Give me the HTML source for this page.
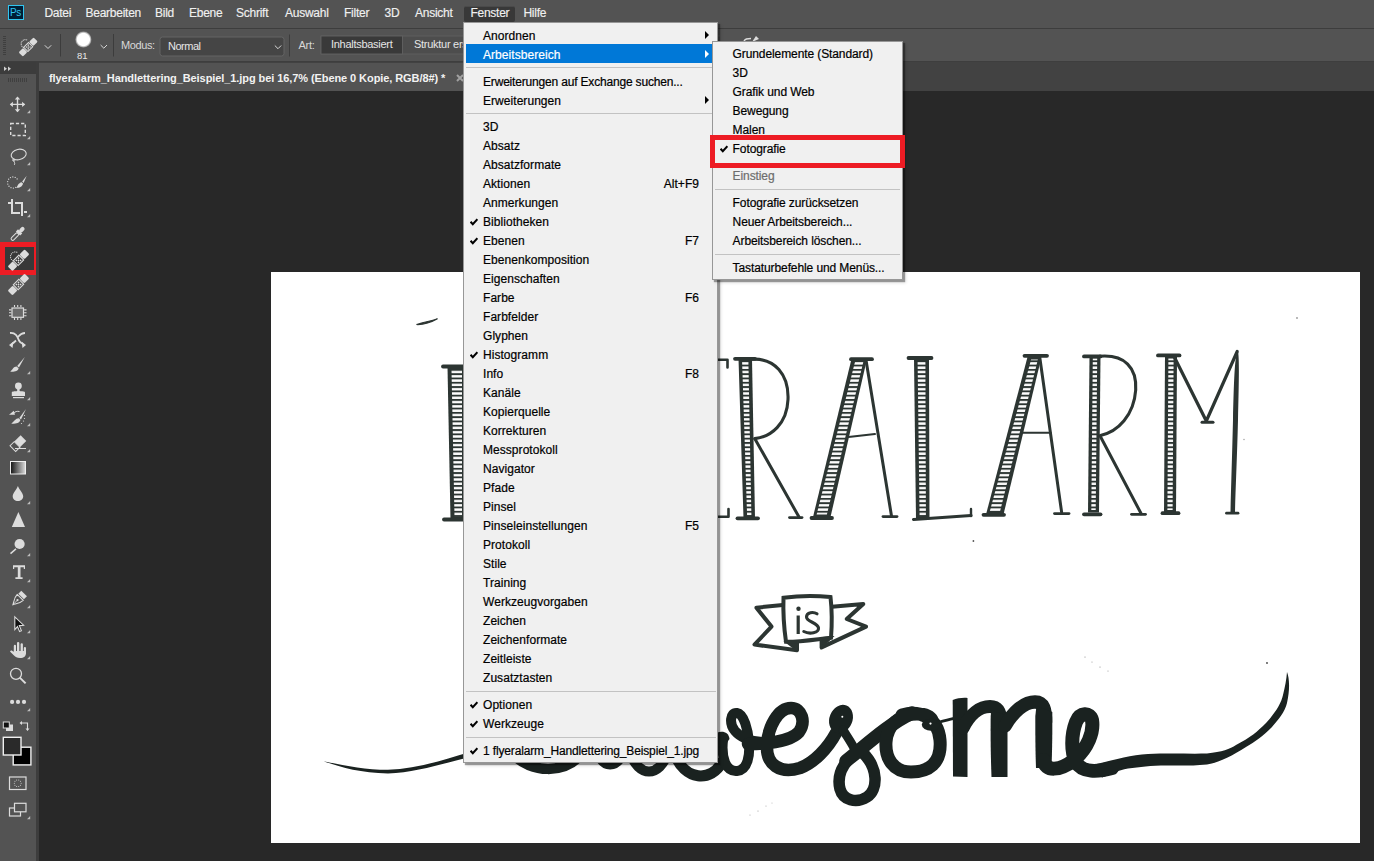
<!DOCTYPE html><html><head><meta charset="utf-8"><style>
*{margin:0;padding:0;box-sizing:border-box}
html,body{width:1374px;height:861px;overflow:hidden;background:#282828;font-family:"Liberation Sans",sans-serif;position:relative}
.a{position:absolute}
.t{position:absolute;white-space:nowrap;line-height:19px}
#menubar{left:0;top:0;width:1374px;height:28px;background:#535353}
.mb{font-size:12px;color:#f0f0f0;letter-spacing:-0.25px;-webkit-text-stroke:0.15px currentColor}
.menu{position:absolute;background:#f0f0f0;border:1px solid #979797;box-shadow:2px 2px 1px rgba(0,0,0,.35),3px 3px 3px rgba(0,0,0,.12)}
.mi{font-size:12px;color:#000;letter-spacing:0.05px;-webkit-text-stroke:0.2px currentColor}
.sep{position:absolute;height:1px;background:#c2c2c2}
.chk{position:absolute}
</style></head><body>
<div id="menubar" class="a"></div>
<div class="a" style="left:0;top:28px;width:1374px;height:1px;background:#3d3d3d"></div>
<div class="a" style="left:8px;top:5px;width:16px;height:15px;background:#001e36;border:1px solid #31c5f0"></div>
<div class="t" style="left:10px;top:3px;font-size:10px;color:#31c5f0;letter-spacing:-0.3px">Ps</div>
<div class="a" style="left:464px;top:6px;width:51px;height:16px;background:#383838;border-radius:2px;border-top:1px solid #4a4a4a"></div>
<div class="t mb" style="left:44.4px;top:4px">Datei</div>
<div class="t mb" style="left:85.5px;top:4px">Bearbeiten</div>
<div class="t mb" style="left:155px;top:4px">Bild</div>
<div class="t mb" style="left:189px;top:4px">Ebene</div>
<div class="t mb" style="left:236px;top:4px">Schrift</div>
<div class="t mb" style="left:285px;top:4px">Auswahl</div>
<div class="t mb" style="left:344px;top:4px">Filter</div>
<div class="t mb" style="left:384.6px;top:4px">3D</div>
<div class="t mb" style="left:415px;top:4px">Ansicht</div>
<div class="t mb" style="left:470.4px;top:4px">Fenster</div>
<div class="t mb" style="left:523.4px;top:4px">Hilfe</div>
<div class="a" style="left:0;top:29px;width:1374px;height:33px;background:#535353"></div>
<div class="a" style="left:0;top:61px;width:1374px;height:1px;background:#3e3e3e"></div>
<svg class="a" style="left:0;top:29px" width="720" height="33" viewBox="0 29 720 33">
<rect x="3" y="36" width="3" height="1" fill="#3f3f3f"/>
<rect x="3" y="38" width="3" height="1" fill="#3f3f3f"/>
<rect x="3" y="40" width="3" height="1" fill="#3f3f3f"/>
<rect x="3" y="42" width="3" height="1" fill="#3f3f3f"/>
<rect x="3" y="44" width="3" height="1" fill="#3f3f3f"/>
<rect x="3" y="46" width="3" height="1" fill="#3f3f3f"/>
<rect x="3" y="48" width="3" height="1" fill="#3f3f3f"/>
<rect x="3" y="50" width="3" height="1" fill="#3f3f3f"/>
<rect x="3" y="52" width="3" height="1" fill="#3f3f3f"/>
<rect x="3" y="54" width="3" height="1" fill="#3f3f3f"/>
<g transform="translate(28.2 47) scale(0.88) rotate(-45)"><rect x="-12" y="-3.4" width="7.2" height="6.8" rx="1.3" fill="#dcdcdc"/><rect x="4.8" y="-3.4" width="7.2" height="6.8" rx="1.3" fill="#dcdcdc"/><rect x="-3.9" y="-3.4" width="7.8" height="6.8" fill="none" stroke="#dcdcdc" stroke-width="1.1"/><circle cx="-1.5" cy="-1.5" r="0.85" fill="#dcdcdc"/><circle cx="1.5" cy="-1.5" r="0.85" fill="#dcdcdc"/><circle cx="-1.5" cy="1.5" r="0.85" fill="#dcdcdc"/><circle cx="1.5" cy="1.5" r="0.85" fill="#dcdcdc"/><circle cx="0" cy="0" r="0.85" fill="#dcdcdc"/></g><circle cx="23.27" cy="47.49" r="0.6" fill="#dcdcdc"/><circle cx="21.97" cy="46.31" r="0.6" fill="#dcdcdc"/><circle cx="21.25" cy="44.71" r="0.6" fill="#dcdcdc"/><circle cx="21.25" cy="42.95" r="0.6" fill="#dcdcdc"/><circle cx="21.97" cy="41.35" r="0.6" fill="#dcdcdc"/><circle cx="23.27" cy="40.17" r="0.6" fill="#dcdcdc"/><circle cx="24.94" cy="39.63" r="0.6" fill="#dcdcdc"/><circle cx="26.69" cy="39.81" r="0.6" fill="#dcdcdc"/>
<rect x="60.0" y="34" width="1" height="22.5" fill="#3c3c3c"/>
<rect x="113.0" y="34" width="1" height="22.5" fill="#3c3c3c"/>
<rect x="289.0" y="34.5" width="1" height="22.0" fill="#3c3c3c"/>
<rect x="730.0" y="34" width="1" height="7" fill="#3c3c3c"/>
<defs><radialGradient id="bc"><stop offset="0.75" stop-color="#fff"/><stop offset="1" stop-color="#fff" stop-opacity="0.2"/></radialGradient></defs>
<circle cx="83.4" cy="39.5" r="8.2" fill="url(#bc)"/>
<rect x="160" y="37" width="124" height="19" rx="2.5" fill="#454545" stroke="#646464" stroke-width="1"/>
<rect x="321" y="36" width="420" height="18" fill="#4d4d4d" stroke="#5e5e5e" stroke-width="1"/>
<rect x="321" y="36" width="81.5" height="18" fill="#393939" stroke="#5e5e5e" stroke-width="1"/>
<path d="M44.8 45.3 L48.0 48.5 L51.199999999999996 45.3" fill="none" stroke="#d8d8d8" stroke-width="1"/>
<path d="M100.6 45 L103.8 48.2 L107.0 45" fill="none" stroke="#d8d8d8" stroke-width="1"/>
<path d="M274.8 45.5 L278.0 48.7 L281.2 45.5" fill="none" stroke="#d8d8d8" stroke-width="1"/>
</svg>
<div style="position:absolute;white-space:nowrap;line-height:14px;font-size:11px;color:#e6e6e6;left:77px;top:48.5px;font-size:9.5px;letter-spacing:-0.1px">81</div>
<div style="position:absolute;white-space:nowrap;line-height:14px;font-size:11px;color:#e6e6e6;left:121px;top:38px;letter-spacing:-0.4px;color:#d8d8d8">Modus:</div>
<div style="position:absolute;white-space:nowrap;line-height:14px;font-size:11px;color:#e6e6e6;left:168px;top:39px;letter-spacing:-0.5px">Normal</div>
<div style="position:absolute;white-space:nowrap;line-height:14px;font-size:11px;color:#e6e6e6;left:298.5px;top:37.5px;letter-spacing:-0.3px;color:#d8d8d8">Art:</div>
<div style="position:absolute;white-space:nowrap;line-height:14px;font-size:11px;color:#e6e6e6;left:331px;top:37px;letter-spacing:-0.28px">Inhaltsbasiert</div>
<div style="position:absolute;white-space:nowrap;line-height:14px;font-size:11px;color:#e6e6e6;left:414px;top:37px;letter-spacing:-0.28px">Struktur erstellen</div>
<svg class="a" style="left:740px;top:33px" width="24" height="10" viewBox="0 0 24 10"><path d="M4 8 C5 5.5 7 5.5 11 5.5" stroke="#ddd" stroke-width="1.3" fill="none"/><path d="M12 9 L16 3 L19 6 Z" fill="#ddd"/></svg>
<div class="a" style="left:39px;top:62px;width:1335px;height:29px;background:#424242"></div>
<div class="a" style="left:39px;top:63px;width:470px;height:28px;background:#535353"></div>
<div class="t" style="left:49px;top:69px;font-size:11px;font-weight:bold;color:#f2f2f2;letter-spacing:-0.08px">flyeralarm_Handlettering_Beispiel_1.jpg bei 16,7% (Ebene 0 Kopie, RGB/8#) *</div>
<svg class="a" style="left:456px;top:73.5px" width="8" height="8" viewBox="0 0 8 8"><path d="M1 1 L7 7 M7 1 L1 7" stroke="#a0a0a0" stroke-width="2"/></svg>
<div class="a" style="left:0;top:62px;width:36px;height:12px;background:#3c3c3c"></div>
<div class="a" style="left:0;top:74px;width:36px;height:787px;background:#535353"></div>
<div class="a" style="left:36px;top:62px;width:3px;height:799px;background:#3d3d3d"></div>
<svg class="a" style="left:0;top:0" width="36" height="861" viewBox="0 0 36 861">
<path d="M4 66.5 L7 68.8 L4 71 Z M8 66.5 L11 68.8 L8 71 Z" fill="#cfcfcf"/>
<rect x="8" y="78" width="1" height="4" fill="#3f3f3f"/>
<rect x="10" y="78" width="1" height="4" fill="#3f3f3f"/>
<rect x="12" y="78" width="1" height="4" fill="#3f3f3f"/>
<rect x="14" y="78" width="1" height="4" fill="#3f3f3f"/>
<rect x="16" y="78" width="1" height="4" fill="#3f3f3f"/>
<rect x="18" y="78" width="1" height="4" fill="#3f3f3f"/>
<rect x="20" y="78" width="1" height="4" fill="#3f3f3f"/>
<rect x="22" y="78" width="1" height="4" fill="#3f3f3f"/>
<rect x="24" y="78" width="1" height="4" fill="#3f3f3f"/>
<rect x="26" y="78" width="1" height="4" fill="#3f3f3f"/>
<g stroke="#dcdcdc" stroke-width="1.4" fill="none"><path d="M17.5 97.5 V111.5 M10.5 104.4 H24.5"/></g>
<path d="M17.5 96.5 L20.2 99.6 L14.8 99.6 Z M17.5 112.3 L20.2 109.2 L14.8 109.2 Z M9.8 104.4 L12.9 101.7 L12.9 107.1 Z M25.2 104.4 L22.1 101.7 L22.1 107.1 Z" fill="#dcdcdc"/>
<path d="M30.2 110 L30.2 113.2 L27 113.2 Z" fill="#bdbdbd"/>
<rect x="10.7" y="123.5" width="14.6" height="12" fill="none" stroke="#dcdcdc" stroke-width="1.4" stroke-dasharray="3.2 2"/>
<path d="M30.2 136 L30.2 139.2 L27 139.2 Z" fill="#bdbdbd"/>
<ellipse cx="18.7" cy="154.5" rx="7.6" ry="5.2" transform="rotate(-12 18.7 154.5)" fill="none" stroke="#dcdcdc" stroke-width="1.1"/>
<path d="M12.5 159.5 C12 161.5 15.5 161.5 14.8 159.6 C14.5 158.5 13 158.8 13.6 160.5 C14.2 162 15.2 163 14.4 164.8" fill="none" stroke="#dcdcdc" stroke-width="1"/>
<path d="M30.2 162 L30.2 165.2 L27 165.2 Z" fill="#bdbdbd"/>
<circle cx="15.70" cy="187.35" r="0.65" fill="#dcdcdc"/>
<circle cx="13.38" cy="188.09" r="0.65" fill="#dcdcdc"/>
<circle cx="10.98" cy="187.69" r="0.65" fill="#dcdcdc"/>
<circle cx="8.99" cy="186.25" r="0.65" fill="#dcdcdc"/>
<circle cx="7.81" cy="184.04" r="0.65" fill="#dcdcdc"/>
<circle cx="7.68" cy="181.53" r="0.65" fill="#dcdcdc"/>
<circle cx="8.63" cy="179.21" r="0.65" fill="#dcdcdc"/>
<circle cx="10.46" cy="177.56" r="0.65" fill="#dcdcdc"/>
<circle cx="12.81" cy="176.90" r="0.65" fill="#dcdcdc"/>
<circle cx="15.20" cy="177.38" r="0.65" fill="#dcdcdc"/>
<circle cx="17.14" cy="178.90" r="0.65" fill="#dcdcdc"/>
<path d="M26.7 175.8 L22.2 181.6 L23.6 183 Z" fill="#dcdcdc"/><path d="M21.6 182.2 C18.5 182.8 17.5 186 16.2 188 C19 188 22.5 187 23 183.6 Z" fill="#dcdcdc"/>
<path d="M30.2 188 L30.2 191.2 L27 191.2 Z" fill="#bdbdbd"/>
<path d="M12 199 V213 H20 M15 203 H22 V216 M8 203 H11 M24 212 H27" fill="none" stroke="#dcdcdc" stroke-width="2"/>
<path d="M30.2 214 L30.2 217.2 L27 217.2 Z" fill="#bdbdbd"/>
<g transform="translate(18 233.5) rotate(-45)"><rect x="-9" y="-1.6" width="9" height="3.2" rx="1.5" fill="none" stroke="#dcdcdc" stroke-width="1"/><rect x="0" y="-3" width="3" height="6" fill="#dcdcdc"/><rect x="2.5" y="-2" width="6" height="4" rx="2" fill="#dcdcdc"/></g>
<rect x="2.5" y="244.5" width="33.5" height="28" fill="none" stroke="#ed1c24" stroke-width="5"/>
<rect x="5" y="247" width="29" height="23" fill="#383838"/>
<g transform="translate(18.5 260.3) scale(1) rotate(-45)"><rect x="-12" y="-3.4" width="7.2" height="6.8" rx="1.3" fill="#dcdcdc"/><rect x="4.8" y="-3.4" width="7.2" height="6.8" rx="1.3" fill="#dcdcdc"/><rect x="-3.9" y="-3.4" width="7.8" height="6.8" fill="none" stroke="#dcdcdc" stroke-width="1.1"/><circle cx="-1.5" cy="-1.5" r="0.85" fill="#dcdcdc"/><circle cx="1.5" cy="-1.5" r="0.85" fill="#dcdcdc"/><circle cx="-1.5" cy="1.5" r="0.85" fill="#dcdcdc"/><circle cx="1.5" cy="1.5" r="0.85" fill="#dcdcdc"/><circle cx="0" cy="0" r="0.85" fill="#dcdcdc"/></g><circle cx="12.90" cy="260.86" r="0.6" fill="#dcdcdc"/><circle cx="11.42" cy="259.52" r="0.6" fill="#dcdcdc"/><circle cx="10.60" cy="257.70" r="0.6" fill="#dcdcdc"/><circle cx="10.60" cy="255.70" r="0.6" fill="#dcdcdc"/><circle cx="11.42" cy="253.88" r="0.6" fill="#dcdcdc"/><circle cx="12.90" cy="252.54" r="0.6" fill="#dcdcdc"/><circle cx="14.80" cy="251.93" r="0.6" fill="#dcdcdc"/><circle cx="16.78" cy="252.13" r="0.6" fill="#dcdcdc"/>
<g transform="translate(18.5 284.5) scale(1) rotate(-45)"><rect x="-12" y="-3.4" width="7.2" height="6.8" rx="1.3" fill="#dcdcdc"/><rect x="4.8" y="-3.4" width="7.2" height="6.8" rx="1.3" fill="#dcdcdc"/><rect x="-3.9" y="-3.4" width="7.8" height="6.8" fill="none" stroke="#dcdcdc" stroke-width="1.1"/><circle cx="-1.5" cy="-1.5" r="0.85" fill="#dcdcdc"/><circle cx="1.5" cy="-1.5" r="0.85" fill="#dcdcdc"/><circle cx="-1.5" cy="1.5" r="0.85" fill="#dcdcdc"/><circle cx="1.5" cy="1.5" r="0.85" fill="#dcdcdc"/><circle cx="0" cy="0" r="0.85" fill="#dcdcdc"/></g>
<rect x="12" y="308" width="11.5" height="9.3" fill="#6a6a6a" stroke="#dcdcdc" stroke-width="1.2"/>
<path d="M14.5 305 V307 M17.7 305 V307 M20.9 305 V307 M14.5 318 V320 M17.7 318 V320 M20.9 318 V320 M9 309.9 H11.4 M9 312.8 H11.4 M9 315.7 H11.4 M24.1 309.9 H26.5 M24.1 312.8 H26.5 M24.1 315.7 H26.5" stroke="#dcdcdc" stroke-width="1.1"/>
<path d="M10 333 C16 332.5 17.5 337 19 340.5 C20 342.5 21.5 343.5 23 344" fill="none" stroke="#dcdcdc" stroke-width="1.8"/><path d="M25 333 C20.5 333 19 336 17.5 337.5 M16 340.5 C14.5 342 13.5 343 12 344" fill="none" stroke="#dcdcdc" stroke-width="1.8"/>
<path d="M26 345 L21.5 341.5 L22.5 348 Z M9 345 L13.5 341.5 L12.5 348 Z" fill="#dcdcdc"/>
<path d="M24.8 357 L17.2 366 L19 367.6 Z" fill="#dcdcdc"/><path d="M16.6 366.5 C13.5 366.5 12.6 369.6 10.3 371.7 C14.5 372 18 371.2 18.6 368.2 Z" fill="#dcdcdc"/>
<path d="M30.2 371 L30.2 374.2 L27 374.2 Z" fill="#bdbdbd"/>
<circle cx="18.4" cy="386" r="3.4" fill="#dcdcdc"/><path d="M17.2 388 H19.6 V391 C22 391.5 25 391.2 25 392.5 V396 H11.8 V392.5 C11.8 391.2 15 391.5 17.2 391 Z" fill="#dcdcdc"/><rect x="13" y="397" width="11" height="1.2" fill="#dcdcdc"/>
<path d="M30.2 397 L30.2 400.2 L27 400.2 Z" fill="#bdbdbd"/>
<path d="M26 409 L19.3 418 L21 419.5 Z" fill="#dcdcdc"/><path d="M18.8 418.3 C15.5 418.3 14 421.5 11.3 423.8 C16 424 19.5 423 20.4 420 Z" fill="#dcdcdc"/>
<path d="M19.5 411.5 C17 411 15 411.5 13.5 413.5" fill="none" stroke="#dcdcdc" stroke-width="1"/><path d="M9 414.8 L13.8 410.8 L15 414.8 Z" fill="#dcdcdc"/>
<circle cx="24.5" cy="415.5" r="0.6" fill="#dcdcdc"/><circle cx="24.5" cy="418.5" r="0.6" fill="#dcdcdc"/><circle cx="23.5" cy="421" r="0.6" fill="#dcdcdc"/><circle cx="21.5" cy="423.5" r="0.6" fill="#dcdcdc"/>
<path d="M30.2 423 L30.2 426.2 L27 426.2 Z" fill="#bdbdbd"/>
<g transform="translate(18.5 443) rotate(-45)"><rect x="-2" y="-4" width="9" height="8" fill="#dcdcdc"/><rect x="-8" y="-4" width="6" height="8" fill="none" stroke="#dcdcdc" stroke-width="1"/></g><path d="M15 448.5 H26" stroke="#dcdcdc" stroke-width="1"/>
<path d="M30.2 449 L30.2 452.2 L27 452.2 Z" fill="#bdbdbd"/>
<defs><linearGradient id="gr" x1="0" x2="1"><stop offset="0" stop-color="#111"/><stop offset="1" stop-color="#ddd"/></linearGradient></defs>
<rect x="10.5" y="461.5" width="15" height="12.5" fill="url(#gr)" stroke="#eee" stroke-width="1"/>
<path d="M17.9 486 C19.5 490 23.2 493.5 23.2 496.3 C23.2 499.4 20.8 501 17.9 501 C15 501 12.7 499.4 12.7 496.3 C12.7 493.5 16.3 490 17.9 486 Z" fill="#dcdcdc"/>
<path d="M30.2 501 L30.2 504.2 L27 504.2 Z" fill="#bdbdbd"/>
<path d="M18.4 512 L25 527 L11.8 527 Z" fill="#dcdcdc"/>
<circle cx="19.6" cy="544" r="5.1" fill="#dcdcdc"/><path d="M16 548.9 L10.5 553.6" stroke="#dcdcdc" stroke-width="1.5"/>
<path d="M30.2 553 L30.2 556.2 L27 556.2 Z" fill="#bdbdbd"/>
<path d="M13 565.2 H25 V569 H23.8 V567.2 H20.5 V577.3 H22.6 V579.1 H15.4 V577.3 H17.8 V567.2 H14.2 V569 H13 Z" fill="#dcdcdc"/>
<path d="M30.2 579 L30.2 582.2 L27 582.2 Z" fill="#bdbdbd"/>
<g transform="translate(18.8 598.8) rotate(45)"><path d="M-4.2 -2 C-4.2 2.5 -1.8 5 0 8.2 C1.8 5 4.2 2.5 4.2 -2 Z" fill="none" stroke="#dcdcdc" stroke-width="1.1"/><rect x="-4" y="-7.5" width="8" height="4.2" fill="#dcdcdc"/><circle cx="0" cy="1.8" r="1.1" fill="#dcdcdc"/><path d="M0 2 V8" stroke="#dcdcdc" stroke-width="0.8"/></g>
<path d="M30.2 605 L30.2 608.2 L27 608.2 Z" fill="#bdbdbd"/>
<path d="M14.8 616.8 L23.6 625.2 L19.3 625.6 L21.4 630.8 L19.6 631.6 L17.5 626.6 L14.8 629.6 Z" fill="#111" stroke="#dcdcdc" stroke-width="1.1"/>
<path d="M30.2 630 L30.2 633.2 L27 633.2 Z" fill="#bdbdbd"/>
<rect x="13.8" y="644.8" width="2.2" height="9" rx="1.1" fill="#dcdcdc"/><rect x="17" y="641.9" width="2.3" height="11" rx="1.1" fill="#dcdcdc"/><rect x="20.6" y="643.3" width="2.3" height="10" rx="1.1" fill="#dcdcdc"/><rect x="23.8" y="647" width="2.2" height="7" rx="1.1" fill="#dcdcdc"/>
<path d="M13.8 651 H26 V653 C26 656 24 658 20 658 C17 658 15.5 657 14 655.5 L10.2 651.8 C9.8 651 10.8 650 11.8 650.6 L13.8 652 Z" fill="#dcdcdc"/>
<path d="M30.2 656 L30.2 659.2 L27 659.2 Z" fill="#bdbdbd"/>
<circle cx="16" cy="673.8" r="5.5" fill="none" stroke="#dcdcdc" stroke-width="1.3"/><path d="M19.8 677.6 L25.6 683.4" stroke="#dcdcdc" stroke-width="2"/>
<circle cx="12.1" cy="701.9" r="2.1" fill="#dcdcdc"/><circle cx="18" cy="701.9" r="2.1" fill="#dcdcdc"/><circle cx="24" cy="701.9" r="2.1" fill="#dcdcdc"/>
<path d="M30.2 708 L30.2 711.2 L27 711.2 Z" fill="#bdbdbd"/>
<rect x="6" y="724.5" width="7" height="6.5" fill="#dcdcdc"/><rect x="3.3" y="722" width="6" height="6" fill="#111" stroke="#dcdcdc" stroke-width="1"/>
<path d="M21 723 H27.5 V729" fill="none" stroke="#dcdcdc" stroke-width="1.1"/><path d="M19.5 723 L22 721 L22 725 Z M27.5 731 L25.5 728.5 L29.5 728.5 Z" fill="#dcdcdc"/>
<rect x="13.2" y="747.2" width="17.7" height="17.7" fill="#000" stroke="#f0f0f0" stroke-width="1.4"/>
<rect x="3.3" y="737.3" width="17.7" height="17.7" fill="#2a2a2a" stroke="#f0f0f0" stroke-width="1.4"/>
<rect x="9.5" y="777" width="16.5" height="12.5" fill="none" stroke="#dcdcdc" stroke-width="1.2"/>
<circle cx="21.10" cy="783.20" r="0.5" fill="#dcdcdc"/>
<circle cx="20.45" cy="785.20" r="0.5" fill="#dcdcdc"/>
<circle cx="18.75" cy="786.43" r="0.5" fill="#dcdcdc"/>
<circle cx="16.65" cy="786.43" r="0.5" fill="#dcdcdc"/>
<circle cx="14.95" cy="785.20" r="0.5" fill="#dcdcdc"/>
<circle cx="14.30" cy="783.20" r="0.5" fill="#dcdcdc"/>
<circle cx="14.95" cy="781.20" r="0.5" fill="#dcdcdc"/>
<circle cx="16.65" cy="779.97" r="0.5" fill="#dcdcdc"/>
<circle cx="18.75" cy="779.97" r="0.5" fill="#dcdcdc"/>
<circle cx="20.45" cy="781.20" r="0.5" fill="#dcdcdc"/>
<rect x="9.5" y="808" width="11" height="8" fill="#535353" stroke="#dcdcdc" stroke-width="1.2"/><rect x="14.5" y="803.3" width="11.5" height="8.5" fill="#535353" stroke="#dcdcdc" stroke-width="1.2"/>
<path d="M30.2 816 L30.2 819.2 L27 819.2 Z" fill="#bdbdbd"/>
</svg>
<div class="a" style="left:271px;top:272px;width:1089px;height:571px;background:#fff"></div>
<svg class="a" style="left:271px;top:272px" width="1089" height="571" viewBox="271 272 1089 571">
<defs><pattern id="hatch" patternUnits="userSpaceOnUse" x="0" y="0" width="10" height="4.3"><rect x="0" y="1" width="10" height="2.4" fill="#fff"/></pattern></defs>
<path d="M416.5 324.5 C423 322 430 321.5 437.5 318.8 C431 322.5 424 324.8 416.5 324.5 Z" fill="#2c3532" stroke="#2c3532" stroke-width="1.2"/>
<path d="M447.5 367 L466 367 L466 519 L450.5 519 Z" fill="#2c3532"/><path d="M451.5 369.5 L462.0 369.5 L462.0 516.5 L454.5 516.5 Z" fill="url(#hatch)"/>
<path d="M443 366.5 L465 366.5" fill="none" stroke="#2c3532" stroke-width="3.8" stroke-linecap="round" stroke-linejoin="round"/>
<path d="M444 519.5 L465 519.5" fill="none" stroke="#2c3532" stroke-width="3.8" stroke-linecap="round" stroke-linejoin="round"/>
<path d="M718 359.8 L727.5 359.8 L727.5 367.5" fill="none" stroke="#2c3532" stroke-width="2.6" stroke-linecap="round" stroke-linejoin="round"/>
<path d="M718 516.8 L728.5 516.8 L728.5 509" fill="none" stroke="#2c3532" stroke-width="2.6" stroke-linecap="round" stroke-linejoin="round"/>
<path d="M738.5 359 L752 359 L755 518 L743.5 518 Z" fill="#2c3532"/><path d="M742.1 361.5 L748.4 361.5 L751.4 515.5 L747.1 515.5 Z" fill="url(#hatch)"/>
<path d="M735 358.8 L755 358.8" fill="none" stroke="#2c3532" stroke-width="3.8" stroke-linecap="round" stroke-linejoin="round"/>
<path d="M737.5 518.3 L758 518.3" fill="none" stroke="#2c3532" stroke-width="3.8" stroke-linecap="round" stroke-linejoin="round"/>
<path d="M751 359.3 C775 357.5 789 375 788 399.5 C787 424 771 437 754.7 438.6" fill="none" stroke="#2c3532" stroke-width="3.1" stroke-linecap="round" stroke-linejoin="round"/>
<path d="M755 439 L799 517" fill="none" stroke="#2c3532" stroke-width="3.0" stroke-linecap="round" stroke-linejoin="round"/>
<path d="M789.5 517.6 L802 517.6" fill="none" stroke="#2c3532" stroke-width="2.8" stroke-linecap="round" stroke-linejoin="round"/>
<path d="M851.5 359 L867 359 L830.5 517 L813 517 Z" fill="#2c3532"/><path d="M855.1 361.5 L863.4 361.5 L826.9 514.5 L816.6 514.5 Z" fill="url(#hatch)"/>
<path d="M851 359.2 L872 359.2" fill="none" stroke="#2c3532" stroke-width="3.8" stroke-linecap="round" stroke-linejoin="round"/>
<path d="M811.5 518 L832 518" fill="none" stroke="#2c3532" stroke-width="3.8" stroke-linecap="round" stroke-linejoin="round"/>
<path d="M866 360 L891.5 516" fill="none" stroke="#2c3532" stroke-width="3.0" stroke-linecap="round" stroke-linejoin="round"/>
<path d="M883 516.6 L897 516.6" fill="none" stroke="#2c3532" stroke-width="2.8" stroke-linecap="round" stroke-linejoin="round"/>
<path d="M848.5 437 L875 434" fill="none" stroke="#2c3532" stroke-width="2" stroke-linecap="round" stroke-linejoin="round"/>
<path d="M914 359 L929 359 L929.5 518 L916 519 Z" fill="#2c3532"/><path d="M917.6 361.5 L925.4 361.5 L925.9 515.5 L919.6 516.5 Z" fill="url(#hatch)"/>
<path d="M908.5 358 L931.5 358" fill="none" stroke="#2c3532" stroke-width="3.8" stroke-linecap="round" stroke-linejoin="round"/>
<path d="M913.5 519.5 L971 515.5" fill="none" stroke="#2c3532" stroke-width="3.2" stroke-linecap="round" stroke-linejoin="round"/>
<path d="M971 509 L971 516" fill="none" stroke="#2c3532" stroke-width="2.4" stroke-linecap="round" stroke-linejoin="round"/>
<path d="M1027.5 357 L1041.5 357 L1003.5 514.5 L986 514.5 Z" fill="#2c3532"/><path d="M1031.1 359.5 L1037.9 359.5 L999.9 512.0 L989.6 512.0 Z" fill="url(#hatch)"/>
<path d="M1024.5 355.8 L1047 355.8" fill="none" stroke="#2c3532" stroke-width="3.8" stroke-linecap="round" stroke-linejoin="round"/>
<path d="M983.5 514.8 L1004 514.8" fill="none" stroke="#2c3532" stroke-width="3.8" stroke-linecap="round" stroke-linejoin="round"/>
<path d="M1040 359 L1061.6 512" fill="none" stroke="#2c3532" stroke-width="3.0" stroke-linecap="round" stroke-linejoin="round"/>
<path d="M1054.5 513.6 L1069 513.6" fill="none" stroke="#2c3532" stroke-width="2.8" stroke-linecap="round" stroke-linejoin="round"/>
<path d="M1022 432.7 L1050.6 432.7" fill="none" stroke="#2c3532" stroke-width="2" stroke-linecap="round" stroke-linejoin="round"/>
<path d="M1089.5 356 L1100.5 356 L1099 512.6 L1088 512.6 Z" fill="#2c3532"/><path d="M1092.8 358.5 L1097.2 358.5 L1095.7 510.1 L1091.3 510.1 Z" fill="url(#hatch)"/>
<path d="M1084 356.4 L1100.5 356.4" fill="none" stroke="#2c3532" stroke-width="3.8" stroke-linecap="round" stroke-linejoin="round"/>
<path d="M1084 514.3 L1100.5 514.3" fill="none" stroke="#2c3532" stroke-width="3.8" stroke-linecap="round" stroke-linejoin="round"/>
<path d="M1099.3 356.3 C1125 354 1137 368 1135.7 390 C1134 415 1118 432 1100.4 435.4" fill="none" stroke="#2c3532" stroke-width="3.1" stroke-linecap="round" stroke-linejoin="round"/>
<path d="M1100.4 436.5 L1141.2 513.7" fill="none" stroke="#2c3532" stroke-width="3.0" stroke-linecap="round" stroke-linejoin="round"/>
<path d="M1131.5 514.3 L1145.5 514.3" fill="none" stroke="#2c3532" stroke-width="2.8" stroke-linecap="round" stroke-linejoin="round"/>
<path d="M1165 356 L1177 356 L1176 512.6 L1164 512.6 Z" fill="#2c3532"/><path d="M1168.4 358.5 L1173.6 358.5 L1172.6 510.1 L1167.4 510.1 Z" fill="url(#hatch)"/>
<path d="M1158 355.4 L1179.5 355.4" fill="none" stroke="#2c3532" stroke-width="3.8" stroke-linecap="round" stroke-linejoin="round"/>
<path d="M1162.5 513.2 L1178.5 513.2" fill="none" stroke="#2c3532" stroke-width="3.8" stroke-linecap="round" stroke-linejoin="round"/>
<path d="M1174.3 357 L1206.3 421 L1237.2 351.5" fill="none" stroke="#2c3532" stroke-width="3.2" stroke-linecap="round" stroke-linejoin="round"/>
<path d="M1202 422.2 L1213 422.2" fill="none" stroke="#2c3532" stroke-width="3" stroke-linecap="round" stroke-linejoin="round"/>
<path d="M1237.5 350.5 C1239.5 352 1239 380 1238 420 C1237 460 1235.5 490 1235 512 L1230.5 512 C1231 490 1232 460 1233 420 C1234 380 1234.5 360 1237.5 350.5 Z" fill="#2c3532"/>
<path d="M1226.5 513.2 L1238 513.2" fill="none" stroke="#2c3532" stroke-width="2.8" stroke-linecap="round" stroke-linejoin="round"/>
<path d="M782.8 604.9 L756.4 607.7 L771.5 626.6 L754.5 644.6 L797 650.3 L797 641.5" fill="#fff" stroke="#2c3532" stroke-width="4" stroke-linejoin="round"/>
<path d="M832 606.8 L863.3 603.9 L846.7 619 L866.1 626.6 L821.6 647.4 L821.6 638" fill="#fff" stroke="#2c3532" stroke-width="4" stroke-linejoin="round"/>
<path d="M786 641.8 L797 641 L797 650.3 Z M821.6 637.5 L832 637 L821.6 647.4 Z" fill="#2c3532" stroke="#2c3532" stroke-width="2"/>
<path d="M783.5 597.8 C800 595.5 815 595.5 830.5 597 C832 610 832 625 831 637.8 C815 639.5 800 642 786 641.8 C784 628 783 612 783.5 597.8 Z" fill="#fff" stroke="#2c3532" stroke-width="4"/>
<circle cx="798.5" cy="608.8" r="2.2" fill="#2c3532"/>
<path d="M798.2 615.5 L798.2 634" fill="none" stroke="#2c3532" stroke-width="3.2" stroke-linecap="butt" stroke-linejoin="round"/>
<path d="M817 613.8 C813.5 611.5 806.5 612 806.5 617 C806.5 622 818 622.5 818.5 628 C819 633 809.5 634.5 803.8 631.5" fill="none" stroke="#2c3532" stroke-width="3.1" stroke-linecap="round" stroke-linejoin="round"/>
<path d="M323.5 761.2 C345 765.5 365 769.8 388 769.8 C415 769 440 761 470 752 L520 742 L520 751 L470 757 C440 764.5 415 772.5 388 773.5 C360 773 340 767 323.5 761.2 Z" fill="#1a2220"/>
<path d="M514 755 C530 772 565 776 583 752" fill="none" stroke="#1a2220" stroke-width="10.5" stroke-linecap="round" stroke-linejoin="round"/>
<path d="M596 752 C603 770 617 770 625 752" fill="none" stroke="#1a2220" stroke-width="8" stroke-linecap="round" stroke-linejoin="round"/>
<path d="M630 752 C638 778 660 778 668 752" fill="none" stroke="#1a2220" stroke-width="10" stroke-linecap="round" stroke-linejoin="round"/>
<path d="M674 752 C684 782 712 782 722 762" fill="none" stroke="#1a2220" stroke-width="11" stroke-linecap="round" stroke-linejoin="round"/>
<path d="M723 740 C721 758 726 772 737 771 C748 770 750 755 749 742 C748 730 744 714 737 713 C730 712 729 724 735 731 C740 737 750 741 762 742" fill="none" stroke="#1a2220" stroke-width="10" stroke-linecap="round" stroke-linejoin="round"/>
<path d="M716.5 733 C722 730 729 732 729.5 739 L723 748 L716.5 746 Z" fill="#1a2220"/>
<path d="M748 744 C765 744 790 742 799 732 C806 722 802 708 791 708 C778 708 768 727 767 745 C766 765 780 774 800 768 C814 763 828 748 836 733" fill="none" stroke="#1a2220" stroke-width="12.5" stroke-linecap="round" stroke-linejoin="round"/>
<ellipse cx="841" cy="719" rx="11.5" ry="14.5" transform="rotate(22 841 719)" fill="#1a2220"/>
<circle cx="842.3" cy="716.8" r="1.0" fill="#fff"/>
<path d="M843 730 C848 738 853 745 856 752" fill="none" stroke="#1a2220" stroke-width="9" stroke-linecap="round" stroke-linejoin="round"/>
<path d="M848 760 C841 768 837 777 840 789 C843 800 856 804 867 797 C878 790 879 768 862 752" fill="none" stroke="#1a2220" stroke-width="11.5" stroke-linecap="round" stroke-linejoin="round"/>
<path d="M846 761 C865 746 890 723 912 713" fill="none" stroke="#1a2220" stroke-width="13.5" stroke-linecap="round" stroke-linejoin="round"/>
<path d="M902 715 C918 710 938 716 940 740 C942 764 928 772 911 772 C893 772 885 758 886 742 C887 725 900 714 917 714 C925 714 930 716 932 720" fill="none" stroke="#1a2220" stroke-width="13" stroke-linecap="round" stroke-linejoin="round"/>
<ellipse cx="931" cy="724.8" rx="9.2" ry="6" fill="#1a2220"/>
<circle cx="930.5" cy="723.6" r="1.1" fill="#fff"/>
<path d="M938 722.5 C943 721 948 719.5 954 718.3" fill="none" stroke="#1a2220" stroke-width="2.8" stroke-linecap="round" stroke-linejoin="round"/>
<path d="M952.7 700 C957 698 964 697.5 967.5 698 L967.5 777 L953 776.5 Z" fill="#1a2220"/>
<path d="M963 728 C970 714 980 706.5 990 706.5 C999 706.5 1001.2 714 1001.2 724" fill="none" stroke="#1a2220" stroke-width="13" stroke-linecap="round" stroke-linejoin="round"/>
<path d="M991.5 710 L1007.5 716 L1007.5 777 L991.5 777 C990.5 750 990.5 730 990.7 716 Z" fill="#1a2220"/>
<path d="M1005 726 C1013 712 1024 702 1035 702 C1044 702 1045.5 710 1045.5 722" fill="none" stroke="#1a2220" stroke-width="13.5" stroke-linecap="round" stroke-linejoin="round"/>
<path d="M1036.5 706 L1052.3 712 C1052.5 735 1052 755 1051.5 768 L1036 768 C1035.3 750 1035.3 730 1035.3 716 Z" fill="#1a2220"/>
<path d="M1043.6 760 C1045 772 1060 771 1074 760 C1088 748 1094 732 1092 720 C1090 712 1080 712 1076 722 C1071 735 1071 752 1076 762 C1082 773 1098 772 1112 768" fill="none" stroke="#1a2220" stroke-width="14" stroke-linecap="round" stroke-linejoin="round"/>
<path d="M1092 765 C1115 760 1130 755 1148 754 C1170 753 1190 754 1207 753.5 C1222 752 1230 749 1236 745 C1250 738 1258 731 1266 723 C1275 713 1281 704 1283 695 C1285 687 1286.5 679 1287 672 C1289.5 678 1290 690 1287 703 C1285 712 1278 720 1272 727 C1263 736 1255 742 1246 747 C1232 756 1218 763 1207 764.5 C1190 766 1180 765.5 1167 765.5 C1150 765.5 1140 767 1128 768.5 C1118 770 1110 775 1102 777.5 Z" fill="#1a2220"/>
<circle cx="1297" cy="318" r="0.9" fill="#999"/>
<circle cx="1244" cy="439.5" r="0.8" fill="#aaa"/>
<circle cx="973.4" cy="541" r="0.9" fill="#555"/>
<circle cx="1267" cy="663" r="0.9" fill="#444"/>
<circle cx="1085" cy="657" r="0.6" fill="#888"/>
<circle cx="1092" cy="662" r="0.6" fill="#999"/>
<circle cx="1100" cy="667" r="0.6" fill="#888"/>
<circle cx="1108" cy="671" r="0.6" fill="#999"/>
<circle cx="750" cy="815" r="0.6" fill="#aaa"/>
<circle cx="758" cy="811" r="0.6" fill="#999"/>
<circle cx="766" cy="806" r="0.6" fill="#aaa"/>
<circle cx="772" cy="803" r="0.6" fill="#bbb"/>
</svg>
<div class="menu" style="left:463px;top:22px;width:255px;height:741px"></div>
<div class="t mi" style="left:483px;top:27px;color:#000">Anordnen</div>
<div class="a" style="left:705px;top:30.5px;width:0;height:0;border-top:4px solid transparent;border-bottom:4px solid transparent;border-left:4px solid #000"></div>
<div class="a" style="left:466px;top:44px;width:250px;height:19px;background:#0078d7"></div>
<div class="t mi" style="left:483px;top:46px;color:#fff">Arbeitsbereich</div>
<div class="a" style="left:705px;top:49.5px;width:0;height:0;border-top:4px solid transparent;border-bottom:4px solid transparent;border-left:4px solid #fff"></div>
<div class="sep" style="left:466px;top:67px;width:250px"></div>
<div class="t mi" style="left:483px;top:72.5px;color:#000;letter-spacing:-0.18px">Erweiterungen auf Exchange suchen...</div>
<div class="t mi" style="left:483px;top:92px;color:#000">Erweiterungen</div>
<div class="a" style="left:705px;top:95.5px;width:0;height:0;border-top:4px solid transparent;border-bottom:4px solid transparent;border-left:4px solid #000"></div>
<div class="sep" style="left:466px;top:113px;width:250px"></div>
<div class="t mi" style="left:483px;top:118px;color:#000">3D</div>
<div class="t mi" style="left:483px;top:137px;color:#000">Absatz</div>
<div class="t mi" style="left:483px;top:156px;color:#000">Absatzformate</div>
<div class="t mi" style="left:483px;top:175px;color:#000">Aktionen</div>
<div class="t mi" style="left:639px;width:60px;text-align:right;top:175px">Alt+F9</div>
<div class="t mi" style="left:483px;top:194px;color:#000">Anmerkungen</div>
<div class="t mi" style="left:483px;top:213px;color:#000">Bibliotheken</div>
<svg class="a" style="left:470px;top:218px" width="8" height="8" viewBox="0 0 8 8"><path d="M0.6 3.8 L2.8 6.2 L7.4 1.2" stroke="#000" stroke-width="2" fill="none"/></svg>
<div class="t mi" style="left:483px;top:232px;color:#000">Ebenen</div>
<div class="t mi" style="left:639px;width:60px;text-align:right;top:232px">F7</div>
<svg class="a" style="left:470px;top:237px" width="8" height="8" viewBox="0 0 8 8"><path d="M0.6 3.8 L2.8 6.2 L7.4 1.2" stroke="#000" stroke-width="2" fill="none"/></svg>
<div class="t mi" style="left:483px;top:251px;color:#000">Ebenenkomposition</div>
<div class="t mi" style="left:483px;top:270px;color:#000">Eigenschaften</div>
<div class="t mi" style="left:483px;top:289px;color:#000">Farbe</div>
<div class="t mi" style="left:639px;width:60px;text-align:right;top:289px">F6</div>
<div class="t mi" style="left:483px;top:308px;color:#000">Farbfelder</div>
<div class="t mi" style="left:483px;top:327px;color:#000">Glyphen</div>
<div class="t mi" style="left:483px;top:346px;color:#000">Histogramm</div>
<svg class="a" style="left:470px;top:351px" width="8" height="8" viewBox="0 0 8 8"><path d="M0.6 3.8 L2.8 6.2 L7.4 1.2" stroke="#000" stroke-width="2" fill="none"/></svg>
<div class="t mi" style="left:483px;top:365px;color:#000">Info</div>
<div class="t mi" style="left:639px;width:60px;text-align:right;top:365px">F8</div>
<div class="t mi" style="left:483px;top:384px;color:#000">Kanäle</div>
<div class="t mi" style="left:483px;top:403px;color:#000">Kopierquelle</div>
<div class="t mi" style="left:483px;top:422px;color:#000">Korrekturen</div>
<div class="t mi" style="left:483px;top:441px;color:#000">Messprotokoll</div>
<div class="t mi" style="left:483px;top:460px;color:#000">Navigator</div>
<div class="t mi" style="left:483px;top:479px;color:#000">Pfade</div>
<div class="t mi" style="left:483px;top:498px;color:#000">Pinsel</div>
<div class="t mi" style="left:483px;top:517px;color:#000">Pinseleinstellungen</div>
<div class="t mi" style="left:639px;width:60px;text-align:right;top:517px">F5</div>
<div class="t mi" style="left:483px;top:536px;color:#000">Protokoll</div>
<div class="t mi" style="left:483px;top:555px;color:#000">Stile</div>
<div class="t mi" style="left:483px;top:574px;color:#000">Training</div>
<div class="t mi" style="left:483px;top:593px;color:#000">Werkzeugvorgaben</div>
<div class="t mi" style="left:483px;top:612px;color:#000">Zeichen</div>
<div class="t mi" style="left:483px;top:631px;color:#000">Zeichenformate</div>
<div class="t mi" style="left:483px;top:650px;color:#000">Zeitleiste</div>
<div class="t mi" style="left:483px;top:669px;color:#000">Zusatztasten</div>
<div class="sep" style="left:466px;top:691px;width:250px"></div>
<div class="t mi" style="left:483px;top:696px;color:#000">Optionen</div>
<svg class="a" style="left:470px;top:701px" width="8" height="8" viewBox="0 0 8 8"><path d="M0.6 3.8 L2.8 6.2 L7.4 1.2" stroke="#000" stroke-width="2" fill="none"/></svg>
<div class="t mi" style="left:483px;top:715px;color:#000">Werkzeuge</div>
<svg class="a" style="left:470px;top:720px" width="8" height="8" viewBox="0 0 8 8"><path d="M0.6 3.8 L2.8 6.2 L7.4 1.2" stroke="#000" stroke-width="2" fill="none"/></svg>
<div class="sep" style="left:466px;top:737px;width:250px"></div>
<div class="t mi" style="left:483px;top:742px;color:#000;letter-spacing:-0.15px">1 flyeralarm_Handlettering_Beispiel_1.jpg</div>
<svg class="a" style="left:470px;top:747px" width="8" height="8" viewBox="0 0 8 8"><path d="M0.6 3.8 L2.8 6.2 L7.4 1.2" stroke="#000" stroke-width="2" fill="none"/></svg>
<div class="menu" style="left:712px;top:41px;width:191px;height:239px"></div>
<div class="t mi" style="left:732.6px;top:45px;color:#000;letter-spacing:-0.1px">Grundelemente (Standard)</div>
<div class="t mi" style="left:732.6px;top:64px;color:#000;letter-spacing:-0.1px">3D</div>
<div class="t mi" style="left:732.6px;top:83px;color:#000;letter-spacing:-0.1px">Grafik und Web</div>
<div class="t mi" style="left:732.6px;top:102px;color:#000;letter-spacing:-0.1px">Bewegung</div>
<div class="t mi" style="left:732.6px;top:121px;color:#000;letter-spacing:-0.1px">Malen</div>
<div class="t mi" style="left:732.6px;top:140px;color:#000;letter-spacing:-0.1px">Fotografie</div>
<svg class="a" style="left:719.6px;top:145px" width="8" height="8" viewBox="0 0 8 8"><path d="M0.6 3.8 L2.8 6.2 L7.4 1.2" stroke="#000" stroke-width="2" fill="none"/></svg>
<div class="t mi" style="left:732.6px;top:167px;color:#6d6d6d;letter-spacing:-0.1px">Einstieg</div>
<div class="sep" style="left:715px;top:189px;width:185px"></div>
<div class="t mi" style="left:732.6px;top:194px;color:#000;letter-spacing:-0.1px">Fotografie zurücksetzen</div>
<div class="t mi" style="left:732.6px;top:213px;color:#000;letter-spacing:-0.1px">Neuer Arbeitsbereich...</div>
<div class="t mi" style="left:732.6px;top:232px;color:#000;letter-spacing:-0.1px">Arbeitsbereich löschen...</div>
<div class="sep" style="left:715px;top:254px;width:185px"></div>
<div class="t mi" style="left:732.6px;top:259px;color:#000;letter-spacing:-0.1px">Tastaturbefehle und Menüs...</div>
<div class="a" style="left:710px;top:135px;width:195px;height:33px;border:5px solid #ed1c24"></div>
</body></html>
